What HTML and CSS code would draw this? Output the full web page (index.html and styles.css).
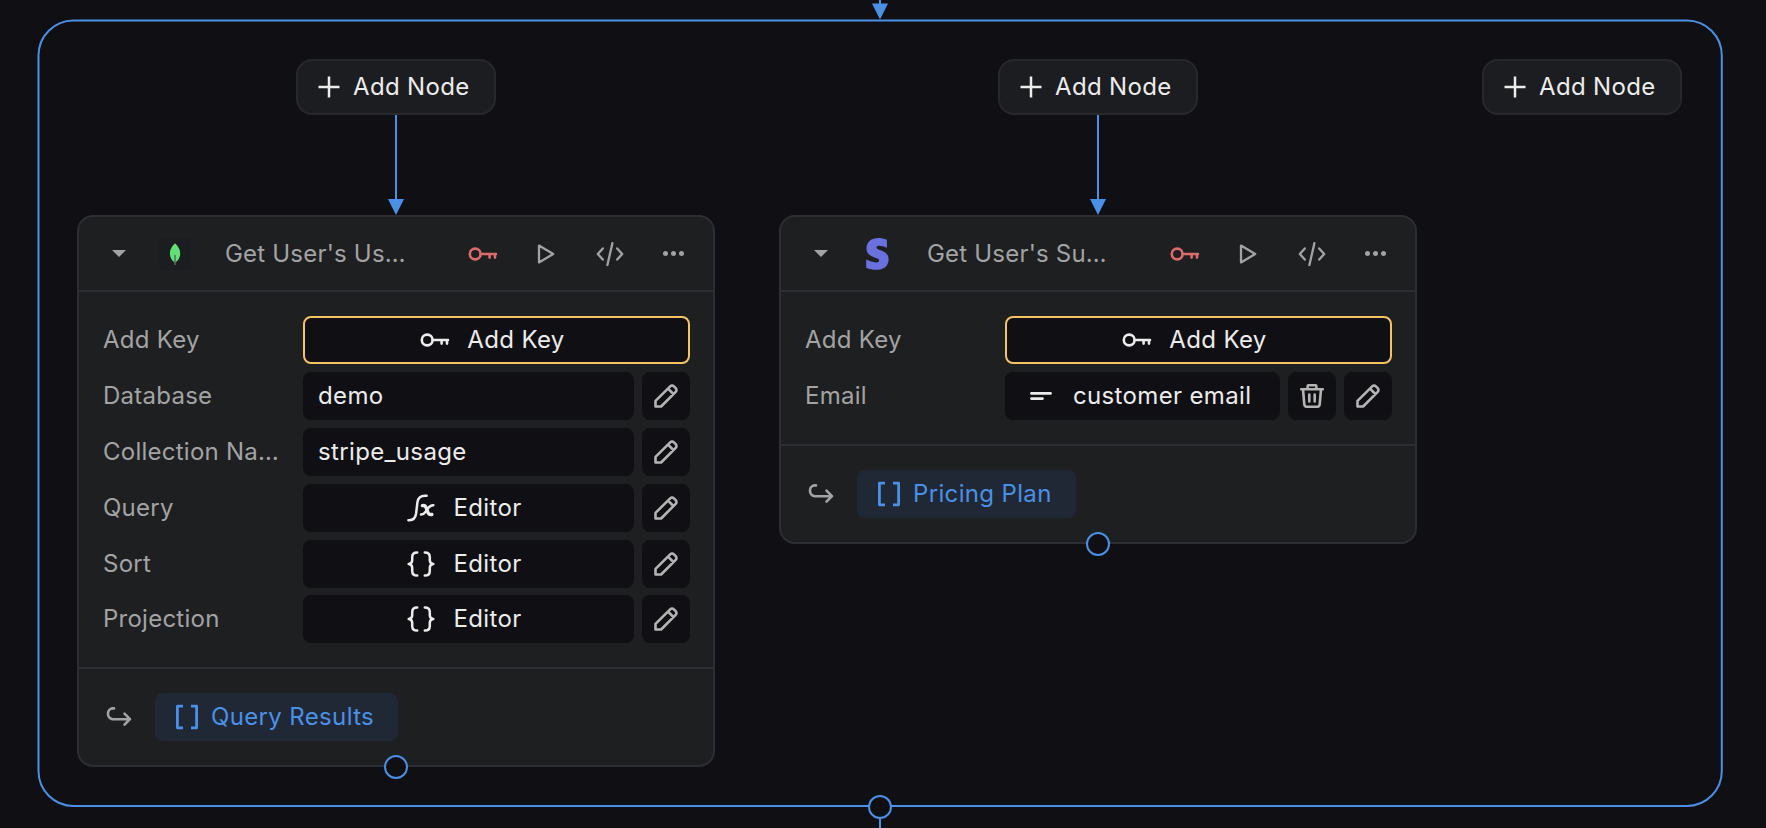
FILE: index.html
```html
<!DOCTYPE html>
<html lang="en">
<head>
  <meta charset="UTF-8" />
  <meta name="viewport" content="width=device-width, initial-scale=1.0"/>
  <title>Workflow Editor</title>
  <link rel="stylesheet" href="styles.css">
</head>
<body>

  <!-- Icon set -->
  <svg class="sprite">
    <symbol id="plus" viewBox="0 0 24 24">
      <path d="M12 1.5v21M1.5 12h21" />
    </symbol>
    <symbol id="key" viewBox="0 0 32 32">
      <circle cx="8.2" cy="16" r="5.4" />
      <path d="M13.6 16H29M28 16v3.6M22.6 16v3.6" />
    </symbol>
    <symbol id="play" viewBox="0 0 24 24">
      <path d="M5 3.6v16.8L19.2 12z" />
    </symbol>
    <symbol id="code" viewBox="0 0 32 32">
      <path d="M8.8 10.4L3.8 16l5 5.6M23.2 10.4l5 5.6-5 5.6M18.4 5.2l-5 21.8" />
    </symbol>
    <symbol id="pencil" viewBox="0 0 24 24">
      <path d="M1.5 22.5v-5.6L16.2 2.3a2.6 2.6 0 0 1 3.7 0l1.8 1.8a2.6 2.6 0 0 1 0 3.7L7.1 22.5zM14 4.6l5.4 5.4" />
    </symbol>
    <symbol id="trash" viewBox="0 0 24 24">
      <path d="M1.2 5.2h21.6M7.6 5V2.6a1.4 1.4 0 0 1 1.4-1.4h6a1.4 1.4 0 0 1 1.4 1.4V5M3 5.4l1.3 15a2.6 2.6 0 0 0 2.6 2.4h10.2a2.6 2.6 0 0 0 2.6-2.4l1.3-15M9.3 10.5v7M14.7 10.5v7" />
    </symbol>
    <symbol id="fx" viewBox="0 0 28 28">
      <path d="M1.4 26.2c5 .4 7-2 7.7-6.7l1.3-11.2C11 4 13.4 1.2 19.6 1.8" />
      <path class="bold" d="M15.4 11.6c2-.4 3 .3 3.7 2.1l1.9 4.900c.6 1.600 1.500 2.200 3.800 1.900" />
      <path d="M26.4 11.2c-2.6-.2-4 1.2-5.4 3.2l-2.4 3.3c-1.2 1.7-2.2 2.8-4.6 2.7" />
    </symbol>
    <symbol id="braces" viewBox="0 0 28 28">
      <path d="M10.2 2.4C6.6 2.4 5.2 3.8 5.2 7v3.2c0 2.2-.9 3.6-3.6 3.8 2.7.2 3.6 1.6 3.6 3.8V21c0 3.2 1.4 4.6 5 4.6M17.8 2.4c3.6 0 5 1.4 5 4.6v3.2c0 2.2.9 3.6 3.6 3.8-2.7.2-3.6 1.6-3.6 3.8V21c0 3.2-1.4 4.6-5 4.6" />
    </symbol>
    <symbol id="lines" viewBox="0 0 24 24">
      <path d="M2.5 9.4h19M2.5 14.6h11" />
    </symbol>
    <symbol id="return" viewBox="0 0 26 26">
      <path d="M8 4.4H6.8A4.8 4.8 0 0 0 2 9.2v.8a5 5 0 0 0 5 5.200h17M18.500 9.700l5.500 5.500-5.500 5.500" />
    </symbol>
    <symbol id="brackets" viewBox="0 0 24 26">
      <path d="M8 2.2H2.4v21.6H8M16 2.2h5.6v21.6H16" />
    </symbol>
  </svg>

  <div class="canvas">

    <!-- Group outline and connections -->
    <svg class="edges" width="1766" height="828">
      <rect x="38.5" y="20.5" width="1683.3" height="785.5" rx="35" />
      <path d="M880 0V6M880 818v10M396 115v86M1098 115v86" />
      <path class="arrow" d="M872 3.5h16l-8 16zM388 199h16l-8 16zM1090 199h16l-8 16z" />
    </svg>

    <button class="add-node add-first"><svg class="icon icon-plus"><use href="#plus" /></svg>Add Node</button>
    <button class="add-node add-second"><svg class="icon icon-plus"><use href="#plus" /></svg>Add Node</button>
    <button class="add-node add-third"><svg class="icon icon-plus"><use href="#plus" /></svg>Add Node</button>

    <!-- MongoDB node -->
    <div class="node node-mongo">
      <div class="node-header">
        <span class="caret"></span>
        <span class="logo logo-mongo">
          <svg width="32" height="32" viewBox="0 0 32 32">
            <path d="M16 5.2c3.6 3.4 5.2 6.5 5.2 10.3 0 4-1.8 6.8-5.2 9.3-3.3-2.5-5.1-5.3-5.1-9.3 0-3.8 1.6-6.9 5.1-10.3z" fill="#62e076" />
            <path d="M16 17v10" stroke="#4a6f5c" stroke-width="1.5" />
          </svg>
        </span>
        <span class="title">Get User's Us…</span>
        <div class="actions">
          <svg class="icon icon-key red"><use href="#key" /></svg>
          <svg class="icon icon-play"><use href="#play" /></svg>
          <svg class="icon icon-code"><use href="#code" /></svg>
          <span class="dots"><i></i><i></i><i></i></span>
        </div>
      </div>
      <div class="node-body">
        <div class="row">
          <span class="label">Add Key</span>
          <button class="field key-btn"><svg class="icon icon-key"><use href="#key" /></svg>Add Key</button>
        </div>
        <div class="row">
          <span class="label">Database</span>
          <div class="field">demo</div>
          <button class="tool"><svg class="icon icon-tool"><use href="#pencil" /></svg></button>
        </div>
        <div class="row">
          <span class="label">Collection Na…</span>
          <div class="field">stripe_usage</div>
          <button class="tool"><svg class="icon icon-tool"><use href="#pencil" /></svg></button>
        </div>
        <div class="row">
          <span class="label">Query</span>
          <button class="field editor-btn"><svg class="icon icon-editor"><use href="#fx" /></svg>Editor</button>
          <button class="tool"><svg class="icon icon-tool"><use href="#pencil" /></svg></button>
        </div>
        <div class="row">
          <span class="label">Sort</span>
          <button class="field editor-btn"><svg class="icon icon-editor"><use href="#braces" /></svg>Editor</button>
          <button class="tool"><svg class="icon icon-tool"><use href="#pencil" /></svg></button>
        </div>
        <div class="row">
          <span class="label">Projection</span>
          <button class="field editor-btn"><svg class="icon icon-editor"><use href="#braces" /></svg>Editor</button>
          <button class="tool"><svg class="icon icon-tool"><use href="#pencil" /></svg></button>
        </div>
      </div>
      <div class="node-footer">
        <svg class="icon icon-return"><use href="#return" /></svg>
        <span class="chip"><svg class="icon icon-brackets"><use href="#brackets" /></svg>Query Results</span>
      </div>
      <span class="port"></span>
    </div>

    <!-- Stripe node -->
    <div class="node node-stripe">
      <div class="node-header">
        <span class="caret"></span>
        <span class="logo">
          <svg width="32" height="32" viewBox="0 0 32 32">
            <path d="M25.9 1.8v8c-2.6-1.2-5.5-2-7.6-2-1.8 0-2.8.5-2.8 1.6 0 3.5 12.1 2 12.1 12 0 6.5-5 10.4-12.5 10.4-3.1 0-6.5-.6-9.9-2.1v-8.1c3 1.6 6.9 2.8 9.9 2.8 2 0 3.1-.6 3.1-1.9C18.2 18.8 5.5 20.5 5.5 10.3 5.5 3.9 10.4 0 17.3 0c3 0 5.8.5 8.6 1.8z" fill="#6b70df" />
          </svg>
        </span>
        <span class="title">Get User's Su…</span>
        <div class="actions">
          <svg class="icon icon-key red"><use href="#key" /></svg>
          <svg class="icon icon-play"><use href="#play" /></svg>
          <svg class="icon icon-code"><use href="#code" /></svg>
          <span class="dots"><i></i><i></i><i></i></span>
        </div>
      </div>
      <div class="node-body">
        <div class="row">
          <span class="label">Add Key</span>
          <button class="field key-btn"><svg class="icon icon-key"><use href="#key" /></svg>Add Key</button>
        </div>
        <div class="row">
          <span class="label">Email</span>
          <div class="field value"><svg class="icon icon-lines"><use href="#lines" /></svg>customer email</div>
          <button class="tool"><svg class="icon icon-tool"><use href="#trash" /></svg></button>
          <button class="tool"><svg class="icon icon-tool"><use href="#pencil" /></svg></button>
        </div>
      </div>
      <div class="node-footer">
        <svg class="icon icon-return"><use href="#return" /></svg>
        <span class="chip"><svg class="icon icon-brackets"><use href="#brackets" /></svg>Pricing Plan</span>
      </div>
      <span class="port"></span>
    </div>

    <span class="port group-port"></span>
  </div>

</body>
</html>
```

FILE: styles.css
```css
* {
  box-sizing: border-box;
}

body {
  margin: 0;
  background: #101014;
  color: #ececec;
  font-family: Inter, "Liberation Sans", sans-serif;
  font-size: 24px;
  line-height: 32px;
  letter-spacing: 0.35px;
  overflow: hidden;
}

button {
  font: inherit;
  letter-spacing: inherit;
  color: inherit;
  border: none;
  cursor: pointer;
}

.sprite {
  display: none;
}

.canvas {
  position: relative;
  width: 1766px;
  height: 828px;
}

.edges {
  position: absolute;
  top: 0;
  left: 0;
  fill: none;
  stroke: #4a90e6;
  stroke-width: 2;
}

.edges .arrow {
  fill: #4a90e6;
  stroke: none;
}

/* icons */
.icon {
  display: block;
  flex: none;
  fill: none;
  stroke: currentColor;
  stroke-width: 2.3;
  stroke-linecap: round;
  stroke-linejoin: round;
}

.bold {
  stroke-width: 3.4;
}

.icon-plus {
  width: 24px;
  height: 24px;
  stroke-width: 2.5;
  stroke-linecap: butt;
}

.icon-key {
  width: 32px;
  height: 32px;
  stroke-width: 2.6;
}

.icon-play {
  width: 24px;
  height: 24px;
}

.icon-code {
  width: 32px;
  height: 32px;
}

.icon-tool {
  width: 24px;
  height: 24px;
  stroke-width: 2.6;
}

.icon-editor {
  width: 28px;
  height: 28px;
  stroke-width: 2.5;
}

.icon-lines {
  width: 24px;
  height: 24px;
  stroke-width: 2.8;
}

.icon-return {
  width: 26px;
  height: 26px;
  stroke-width: 2.6;
}

.icon-brackets {
  width: 24px;
  height: 26px;
  stroke-width: 2.8;
  stroke-linecap: butt;
}

.red {
  color: #dc6b6b;
}

/* add node buttons */
.add-node {
  position: absolute;
  top: 59px;
  width: 200px;
  height: 56px;
  display: flex;
  align-items: center;
  gap: 12px;
  padding: 0 0 0 19px;
  background: #1c1d20;
  border: 2px solid #27282c;
  border-radius: 16px;
}

.add-first {
  left: 296px;
}

.add-second {
  left: 998px;
}

.add-third {
  left: 1482px;
}

/* nodes */
.node {
  position: absolute;
  top: 215px;
  width: 638px;
  background: #1e1f21;
  border: 2px solid #2d2e33;
  border-radius: 16px;
}

.node-mongo {
  left: 77px;
}

.node-stripe {
  left: 779px;
}

.node-header {
  display: flex;
  align-items: center;
  height: 75.4px;
  padding: 0 28px 0 33px;
  border-bottom: 2px solid #2d2e33;
  color: #a3a3a4;
}

.caret {
  border: 7px solid transparent;
  border-top-color: #a3a3a4;
  border-bottom: none;
}

.logo {
  width: 32px;
  height: 32px;
  margin-left: 33px;
}

.logo-mongo {
  background: #1b1d20;
}

.logo svg {
  display: block;
}

.title {
  margin-left: 34px;
  letter-spacing: 0.2px;
}

.actions {
  display: flex;
  align-items: center;
  gap: 35.5px;
  margin-left: auto;
}

.dots {
  display: flex;
  justify-content: center;
  gap: 3px;
  width: 24px;
}

.dots i {
  width: 5px;
  height: 5px;
  border-radius: 50%;
  background: #a3a3a4;
}

.node-body {
  display: flex;
  flex-direction: column;
  gap: 7.8px;
  padding: 24px 23px 24px 24px;
  border-bottom: 2px solid #2d2e33;
}

.row {
  display: flex;
  gap: 8px;
  height: 48px;
}

.label {
  flex: none;
  width: 192px;
  padding-top: 8px;
  color: #a3a3a4;
  letter-spacing: 0.25px;
}

.field {
  flex: 1;
  display: flex;
  align-items: center;
  padding: 0 16px 0 15px;
  background: #101014;
  border-radius: 8px;
}

.key-btn {
  justify-content: center;
  gap: 16px;
  padding-right: 24px;
  border: 2px solid #f4c363;
}

.editor-btn {
  justify-content: center;
  gap: 18px;
  padding-right: 23px;
}

.value {
  gap: 20px;
  padding-left: 24px;
}

.tool {
  flex: none;
  display: flex;
  align-items: center;
  justify-content: center;
  width: 48px;
  padding: 0;
  background: #101014;
  border-radius: 8px;
  color: #b4b4b5;
}

.node-footer {
  display: flex;
  align-items: center;
  gap: 23px;
  padding: 24px 27px 23.6px;
  color: #a3a3a4;
}

.chip {
  display: flex;
  align-items: center;
  gap: 12px;
  height: 48px;
  padding: 0 24px 0 20px;
  background: #212835;
  border-radius: 8px;
  color: #4a90e6;
}

.port {
  position: absolute;
  left: 50%;
  bottom: -14px;
  width: 24px;
  height: 24px;
  margin-left: -12px;
  background: #101014;
  border: 2px solid #4a90e6;
  border-radius: 50%;
}

.group-port {
  left: 880px;
  bottom: 9px;
}
```
